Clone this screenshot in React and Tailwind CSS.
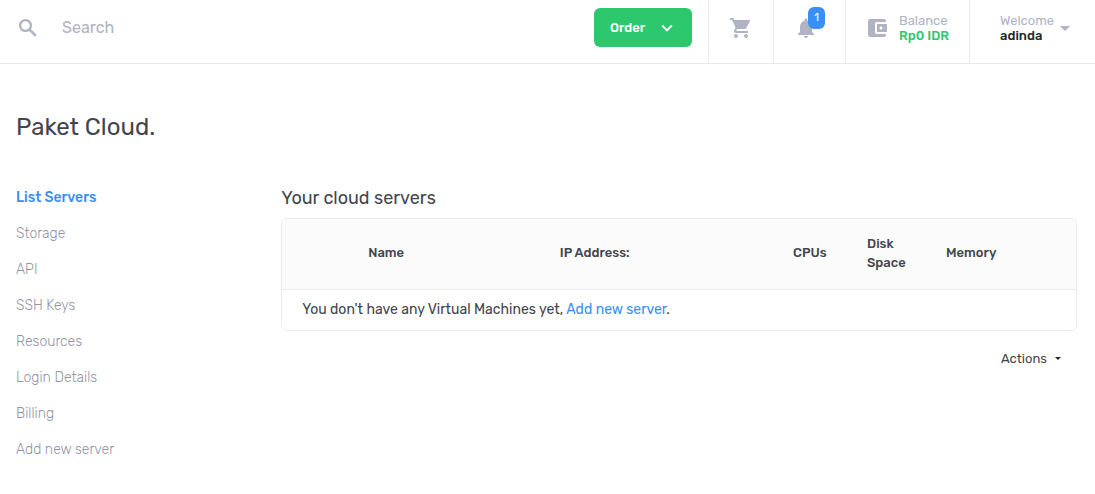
import React from "react";
import {
  MdShoppingCart,
  MdNotifications,
  MdAccountBalanceWallet,
  MdArrowDropDown,
  MdKeyboardArrowDown,
} from "react-icons/md";

const menu = [
  "List Servers",
  "Storage",
  "API",
  "SSH Keys",
  "Resources",
  "Login Details",
  "Billing",
  "Add new server",
];

function SearchIcon() {
  return (
    <svg viewBox="0 0 24 24" className="w-6 h-6 shrink-0" fill="none" stroke="currentColor">
      <circle cx="9.5" cy="9.5" r="5.4" strokeWidth="2.3" />
      <path d="M13.6 13.6L19.8 19.8" strokeWidth="2.6" />
    </svg>
  );
}

function TopBar() {
  return (
    <header className="flex h-16 border-b border-[#e9eaec] text-[#b0b3c3]">
      <label className="flex flex-1 min-w-0 items-center pl-4 pb-2">
        <SearchIcon />
        <input
          type="search"
          aria-label="Search"
          placeholder="Search"
          className="ml-[22px] w-full min-w-0 outline-none text-base text-[#3e4047] placeholder:text-[#b0b3c3]"
        />
      </label>

      <button className="mt-2 mr-4 h-[39px] w-[98px] shrink-0 rounded-md bg-[#2dc76d] text-white text-[13px] font-medium flex items-center justify-between pl-4 pr-[14px]">
        Order
        <MdKeyboardArrowDown className="w-[22px] h-[22px]" />
      </button>

      <button aria-label="Cart" className="w-[65px] shrink-0 border-l border-[#e9eaec] flex justify-center pt-4">
        <MdShoppingCart className="w-6 h-6" />
      </button>

      <button aria-label="Notifications" className="w-[72px] shrink-0 border-l border-[#e9eaec] flex pl-5 pt-4">
        <span className="relative">
          <MdNotifications className="w-6 h-6" />
          <span className="absolute -top-[9px] left-[14px] w-[17px] h-[22px] rounded-md bg-[#388ff4] text-white text-[11px] leading-[22px] text-center">
            1
          </span>
        </span>
      </button>

      <a href="#balance" className="w-[124px] shrink-0 border-l border-[#e9eaec] flex pl-[19px] pt-[13px] text-[13px] leading-[15px]">
        <MdAccountBalanceWallet className="w-6 h-6 mt-[3px] mr-[10px]" />
        <span>
          <span className="block">Balance</span>
          <span className="block font-medium text-[#2dc76d]">Rp0 IDR</span>
        </span>
      </a>

      <button className="w-[126px] shrink-0 border-l border-[#e9eaec] flex items-start pl-[30px] pt-[13px] text-left text-[13px] leading-[15px]">
        <span className="w-[53px]">
          <span className="block">Welcome</span>
          <span className="block font-medium text-[#24262b]">adinda</span>
        </span>
        <MdArrowDropDown className="w-6 h-6 mt-[3px]" />
      </button>
    </header>
  );
}

function SideMenu() {
  return (
    <nav className="w-1/4 text-sm leading-5">
      <ul className="space-y-4">
        {menu.map((item, i) => (
          <li key={item}>
            <a href="#" className={i === 0 ? "font-medium text-[#388ff4]" : "font-light text-[#9395a5]"}>
              {item}
            </a>
          </li>
        ))}
      </ul>
    </nav>
  );
}

function ServersTable() {
  return (
    <div className="rounded-md border border-[#ebecee] overflow-hidden">
      <table className="w-full table-fixed text-left">
        <colgroup>
          <col className="w-[66px]" />
          <col className="w-[24%]" />
          <col />
          <col className="w-[74px]" />
          <col className="w-[79px]" />
          <col className="w-[90px]" />
          <col className="w-[60px]" />
        </colgroup>
        <thead className="bg-[#fbfbfb] text-[13px] leading-[19px] text-[#43454d]">
          <tr className="h-[70px] border-b border-[#ebecee]">
            <td></td>
            <th className="pl-5 pb-[2px] font-medium">Name</th>
            <th className="pl-[21px] pb-[2px] font-medium">IP Address:</th>
            <th className="pl-5 pb-[2px] font-medium">CPUs</th>
            <th className="pl-5 pb-[2px] font-medium">Disk Space</th>
            <th className="pl-5 pb-[2px] font-medium">Memory</th>
            <td></td>
          </tr>
        </thead>
        <tbody>
          <tr>
            <td colSpan={7} className="px-5 py-[10px] text-sm leading-5">
              You don't have any Virtual Machines yet,{" "}
              <a href="#" className="text-[#388ff4]">Add new server</a>.
            </td>
          </tr>
        </tbody>
      </table>
    </div>
  );
}

export default function App() {
  return (
    <div className="bg-white text-[#43454d] font-['Rubik','Roboto',sans-serif]">
      <TopBar />
      <main className="pl-4 pr-[18px] pt-[47px] pb-8">
        <h1 className="text-2xl leading-8">Paket Cloud.</h1>
        <div className="flex mt-[45px]">
          <SideMenu />
          <section className="w-3/4">
            <h2 className="text-lg leading-5 mb-[10px]">Your cloud servers</h2>
            <ServersTable />
            <div className="flex justify-end mt-[18px] pr-4">
              <button className="flex items-center gap-2 text-[13px] leading-5">
                Actions
                <span className="border-x-[3px] border-x-transparent border-t-[3px] border-t-[#24262b]"></span>
              </button>
            </div>
          </section>
        </div>
      </main>
    </div>
  );
}
